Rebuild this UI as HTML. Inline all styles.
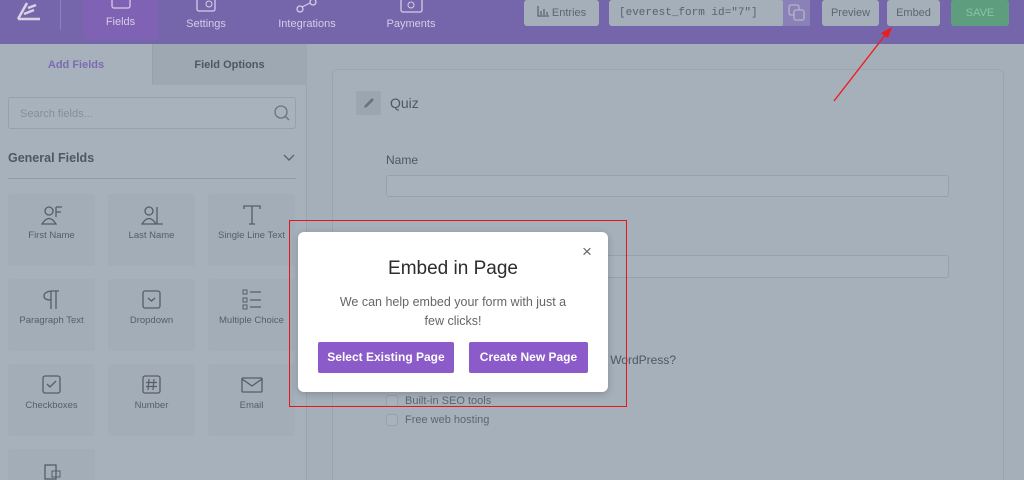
<!DOCTYPE html>
<html><head><meta charset="utf-8"><style>
*{margin:0;padding:0;box-sizing:border-box}
html,body{width:1024px;height:480px;overflow:hidden}
body{background:#a5afb9;font-family:"Liberation Sans",sans-serif;position:relative}
.a{position:absolute}
.hdr{left:0;top:0;width:1024px;height:44px;background:#7566ab}
.nav{color:#d4cde6;font-size:11px;text-align:center}
.tbtn{background:#a5afb9;border-radius:3px;color:#5d6670;font-size:11px;text-align:center;line-height:26px;top:0;height:26px}
.cell{width:87px;height:72px;background:#a3adb7;border-radius:3px;text-align:center;font-size:9.5px;color:#555e68}
.cell svg{display:block;margin:10px auto 4px}
.lbl{font-size:12px;color:#4f5862}
.inp{border:1px solid #97a1ab;border-radius:3px;background:#a8b2bc}
</style></head><body>
<div class="a hdr"></div>
<svg class="a" style="left:16px;top:0" width="26" height="22" viewBox="0 0 26 22"><path d="M2 19 L11 3 M2 19 H24 M8 14 L18 10 M12 8 L20 5" stroke="#d8d4e6" stroke-width="2.5" fill="none"/></svg>
<div class="a" style="left:60px;top:0;width:1px;height:30px;background:#8c80bd"></div>
<div class="a" style="left:83px;top:0;width:75px;height:40px;background:#7f62b3;border-radius:0 0 4px 4px"></div>
<div class="a nav" style="left:83px;top:16px;width:75px">Fields</div>
<div class="a nav" style="left:170px;top:18px;width:72px">Settings</div>
<div class="a nav" style="left:262px;top:18px;width:90px">Integrations</div>
<div class="a nav" style="left:372px;top:18px;width:78px">Payments</div>
<svg class="a" style="left:110px;top:0" width="22" height="10"><rect x="2" y="-4" width="18" height="12" rx="2" stroke="#d4cde6" fill="none" stroke-width="1.3"/></svg>
<svg class="a" style="left:196px;top:0" width="22" height="12"><rect x="1" y="-4" width="18" height="15" rx="2" stroke="#d4cde6" fill="none" stroke-width="1.3"/><circle cx="13" cy="4" r="3" stroke="#d4cde6" fill="none"/></svg>
<svg class="a" style="left:296px;top:0" width="24" height="14"><circle cx="4" cy="9" r="3" stroke="#d4cde6" fill="none" stroke-width="1.3"/><circle cx="17" cy="2" r="3" stroke="#d4cde6" fill="none" stroke-width="1.3"/><path d="M6 7 L14 3" stroke="#d4cde6"/></svg>
<svg class="a" style="left:400px;top:0" width="24" height="14"><rect x="1" y="-3" width="21" height="15" rx="2" stroke="#d4cde6" fill="none" stroke-width="1.3"/><circle cx="11" cy="5" r="3" stroke="#d4cde6" fill="none"/></svg>

<div class="a tbtn" style="left:524px;width:75px"><svg width="12" height="11" style="vertical-align:-1px"><path d="M1 0 V10 H12 M4 9 V5 M7 9 V3 M10 9 V6" stroke="#5d6670" stroke-width="1.3" fill="none"/></svg> Entries</div>
<div class="a tbtn" style="left:609px;width:175px;text-align:left;padding-left:10px;font-family:'Liberation Mono',monospace;font-size:11px;color:#59626c">[everest_form id="7"]</div>
<div class="a" style="left:783px;top:0;width:27px;height:26px;background:#8a82b6"></div>
<svg class="a" style="left:788px;top:4px" width="18" height="18"><rect x="1" y="1" width="10" height="10" rx="2" stroke="#b8b4cc" fill="none" stroke-width="1.3"/><rect x="6" y="6" width="10" height="10" rx="2" stroke="#b8b4cc" fill="#8a82b6" stroke-width="1.3"/></svg>
<div class="a tbtn" style="left:822px;width:57px">Preview</div>
<div class="a tbtn" style="left:887px;width:53px">Embed</div>
<div class="a tbtn" style="left:951px;width:58px;background:#5e9e7e;color:#8cc3a6">SAVE</div>

<div class="a" style="left:0;top:44px;width:307px;height:436px;background:#a7b1bb;border-right:1px solid #9aa4ae"></div>
<div class="a" style="left:152px;top:44px;width:155px;height:41px;background:#9ea8b2;border-left:1px solid #97a1ab"></div>
<div class="a" style="left:0;top:59px;width:152px;text-align:center;font-size:11px;font-weight:bold;color:#7a6bb3">Add Fields</div>
<div class="a" style="left:152px;top:59px;width:155px;text-align:center;font-size:11px;font-weight:bold;color:#4f5862">Field Options</div>
<div class="a inp" style="left:8px;top:97px;width:288px;height:32px"></div>
<div class="a" style="left:20px;top:108px;font-size:11px;color:#858f99">Search fields...</div>
<svg class="a" style="left:273px;top:104px" width="18" height="18"><circle cx="8" cy="8" r="6" stroke="#6b747e" fill="none" stroke-width="1.3"/><path d="M12.5 12.5 L16 16" stroke="#6b747e" stroke-width="1.3"/></svg>
<div class="a" style="left:8px;top:151px;font-size:12.5px;font-weight:bold;color:#4f5862">General Fields</div>
<svg class="a" style="left:282px;top:153px" width="14" height="10"><path d="M2 2 L7 7 L12 2" stroke="#5d6670" fill="none" stroke-width="1.4"/></svg>
<div class="a" style="left:8px;top:178px;width:288px;height:1px;background:#939da7"></div>

<div class="a cell" style="left:8px;top:194px"><svg width="22" height="22"><circle cx="8" cy="7" r="4" stroke="#555e68" fill="none" stroke-width="1.3"/><path d="M1 20 Q8 9 15 20 Z M15 3 H21 M15 3 V13 M15 8 H20" stroke="#555e68" fill="none" stroke-width="1.3"/></svg>First Name</div>
<div class="a cell" style="left:108px;top:194px"><svg width="22" height="22"><circle cx="8" cy="7" r="4" stroke="#555e68" fill="none" stroke-width="1.3"/><path d="M1 20 Q8 9 15 20 Z M16 3 V20 H22" stroke="#555e68" fill="none" stroke-width="1.3"/></svg>Last Name</div>
<div class="a cell" style="left:208px;top:194px"><svg width="22" height="22"><path d="M3 5 V2 H19 V5 M11 2 V20 M8 20 H14" stroke="#555e68" fill="none" stroke-width="1.3"/></svg>Single Line Text</div>
<div class="a cell" style="left:8px;top:279px"><svg width="22" height="22"><path d="M10 2 H18 M10 2 V20 M15 2 V20 M10 2 Q3 3 3 7 Q3 11 10 11" stroke="#555e68" fill="none" stroke-width="1.3"/></svg>Paragraph Text</div>
<div class="a cell" style="left:108px;top:279px"><svg width="22" height="22"><rect x="2" y="2" width="17" height="17" rx="2" stroke="#555e68" fill="none" stroke-width="1.3"/><path d="M7 9 L10.5 12 L14 9" stroke="#555e68" fill="none" stroke-width="1.3"/></svg>Dropdown</div>
<div class="a cell" style="left:208px;top:279px"><svg width="22" height="22"><rect x="2" y="1" width="4" height="4" stroke="#555e68" fill="none"/><rect x="2" y="9" width="4" height="4" stroke="#555e68" fill="none"/><rect x="2" y="16" width="4" height="4" stroke="#555e68" fill="none"/><path d="M9 3 H20 M9 11 H20 M9 18 H20" stroke="#555e68" stroke-width="1.3"/></svg>Multiple Choice</div>
<div class="a cell" style="left:8px;top:364px"><svg width="22" height="22"><rect x="2" y="2" width="17" height="17" rx="2" stroke="#555e68" fill="none" stroke-width="1.3"/><path d="M6 10 L9 13 L15 7" stroke="#555e68" fill="none" stroke-width="1.3"/></svg>Checkboxes</div>
<div class="a cell" style="left:108px;top:364px"><svg width="22" height="22"><rect x="2" y="2" width="17" height="17" rx="2" stroke="#555e68" fill="none" stroke-width="1.3"/><path d="M8 5 L7 16 M13 5 L12 16 M5 8.5 H16 M5 12.5 H16" stroke="#555e68" fill="none" stroke-width="1.2"/></svg>Number</div>
<div class="a cell" style="left:208px;top:364px"><svg width="22" height="22"><rect x="1" y="4" width="20" height="14" rx="1" stroke="#555e68" fill="none" stroke-width="1.3"/><path d="M1 5 L11 12 L21 5" stroke="#555e68" fill="none" stroke-width="1.3"/></svg>Email</div>
<div class="a cell" style="left:8px;top:449px;height:31px"><svg width="22" height="22"><rect x="4" y="6" width="11" height="14" stroke="#555e68" fill="none" stroke-width="1.3"/><rect x="11" y="12" width="8" height="6" stroke="#555e68" fill="none"/></svg></div>

<div class="a" style="left:332px;top:69px;width:672px;height:411px;background:#a6b0ba;border:1px solid #9ba5af;border-bottom:none;border-radius:6px 6px 0 0"></div>
<div class="a" style="left:356px;top:91px;width:25px;height:24px;background:#9ca6b0;border-radius:2px"></div>
<svg class="a" style="left:362px;top:96px" width="14" height="14"><path d="M2 12 L3 9 L10 2 L12 4 L5 11 Z" fill="#6b747e"/></svg>
<div class="a" style="left:390px;top:95px;font-size:14px;color:#4f5862">Quiz</div>
<div class="a lbl" style="left:386px;top:153px">Name</div>
<div class="a inp" style="left:386px;top:175px;width:563px;height:22px"></div>
<div class="a inp" style="left:386px;top:255px;width:563px;height:23px"></div>
<div class="a lbl" style="left:386px;top:353px;width:290px;text-align:right">f WordPress?</div>
<div class="a inp" style="left:386px;top:395px;width:12px;height:12px"></div>
<div class="a" style="left:405px;top:395px;font-size:11px;color:#5d6670">Built-in SEO tools</div>
<div class="a inp" style="left:386px;top:414px;width:12px;height:12px"></div>
<div class="a" style="left:405px;top:414px;font-size:11px;color:#5d6670">Free web hosting</div>

<svg class="a" style="left:820px;top:20px" width="80" height="90"><path d="M14 81 L66 14" stroke="#ee1c1c" stroke-width="1.4"/><path d="M72 7 L61 13 L68 18 Z" fill="#ee1c1c"/></svg>

<div class="a" style="left:289px;top:220px;width:338px;height:187px;border:1.5px solid #e8141c"></div>
<div class="a" style="left:298px;top:232px;width:310px;height:160px;background:#fff;border-radius:6px;box-shadow:0 2px 8px rgba(0,0,0,.2)"></div>
<div class="a" style="left:582px;top:242px;font-size:17px;color:#666">&#215;</div>
<div class="a" style="left:298px;top:258px;width:310px;text-align:center;font-size:19px;color:#2c2c2c">Embed in Page</div>
<div class="a" style="left:330px;top:293px;width:246px;text-align:center;font-size:12.5px;line-height:19px;color:#666">We can help embed your form with just a few clicks!</div>
<div class="a" style="left:318px;top:342px;width:136px;height:31px;background:#8a5bc9;border-radius:2px;color:#fff;font-size:12px;font-weight:bold;text-align:center;line-height:31px">Select Existing Page</div>
<div class="a" style="left:469px;top:342px;width:119px;height:31px;background:#8a5bc9;border-radius:2px;color:#fff;font-size:12px;font-weight:bold;text-align:center;line-height:31px">Create New Page</div>
</body></html>
